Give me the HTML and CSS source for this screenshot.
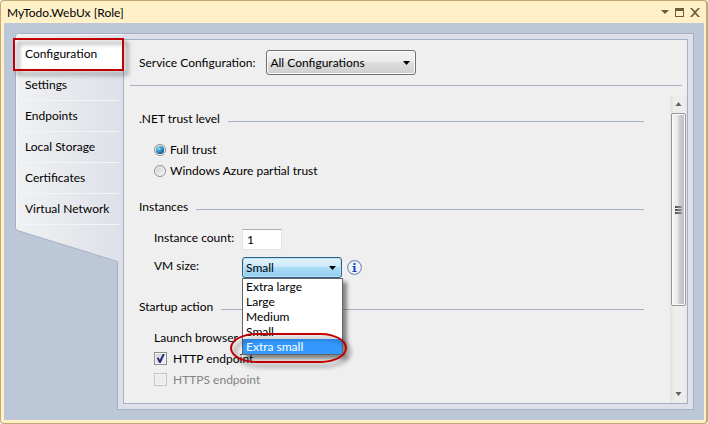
FILE: index.html
```html
<!DOCTYPE html>
<html lang="en">
<head>
<meta charset="utf-8">
<title>MyTodo.WebUx [Role]</title>
<link rel="stylesheet" href="styles.css">
</head>
<body>
<div class="window">
  <header class="titlebar">
    <h1 class="title">MyTodo.WebUx [Role]</h1>
    <div class="window-buttons">
      <button type="button" class="window-button" aria-label="Window menu"><svg width="8" height="11" viewBox="0 0 8 11"><path d="M0 3h8L4 7z"/></svg></button>
      <button type="button" class="window-button" aria-label="Maximize"><svg width="9" height="11" viewBox="0 0 9 11"><path fill-rule="evenodd" d="M0 1h9v9H0zM1 4v5h7V4z"/></svg></button>
      <button type="button" class="window-button" aria-label="Close"><svg width="10" height="11" viewBox="0 0 10 11"><path d="M0 1h2l3 3 3-3h2L6 5.500l4 4.500H8L5 7l-3 3H0l4-4.500z"/></svg></button>
    </div>
  </header>
  <div class="body">
    <nav class="tabs" aria-label="Role pages">
      <svg class="tabs-shape" viewBox="0 0 109 229" preserveAspectRatio="none" aria-hidden="true">
        <defs><linearGradient id="tabs-fill"><stop offset="0" stop-color="#f0f1f2"/><stop offset="1" stop-color="#dde0e8"/></linearGradient></defs>
        <path d="M.5 195V3.500Q.5 .5 3.500 .5H109V229H102.500V228.500L2.500 197.500Q.5 196.500 .5 195z" fill="url(#tabs-fill)"/>
        <path d="M109 .5H3.500Q.5 .5 .5 3.500V195Q.5 196.500 2.500 197.500L102.500 228.500" fill="none" stroke="#a5b1c3"/>
        <path d="M1.500 195V4Q1.500 1.500 4 1.500H108" fill="none" stroke="#f6f7f9"/>
        <path d="M108.500 229V6" stroke="#a5b1c3"/>
      </svg>
      <a class="tab tab-active" href="#configuration" aria-current="page">Configuration</a>
      <a class="tab" href="#settings">Settings</a>
      <a class="tab" href="#endpoints">Endpoints</a>
      <a class="tab" href="#storage">Local Storage</a>
      <a class="tab" href="#certificates">Certificates</a>
      <a class="tab" href="#network">Virtual Network</a>
      <span class="mark mark-box"></span>
    </nav>
    <div class="frame">
      <main class="page" id="configuration">
        <div class="toolbar">
          <label for="service">Service Configuration:</label>
          <span class="picker picker-service">
            <select id="service"><option>All Configurations</option></select>
            <svg class="arrow" width="7" height="4" viewBox="0 0 7 4"><path d="M0 0h7L3.500 4z"/></svg>
          </span>
        </div>
        <div class="scroller">
          <div class="content">
            <section class="section">
              <h2 class="heading">.NET trust level</h2>
              <label class="choice"><input type="radio" name="trust" checked>Full trust</label>
              <label class="choice"><input type="radio" name="trust">Windows Azure partial trust</label>
            </section>
            <section class="section">
              <h2 class="heading">Instances</h2>
              <div class="fields">
                <label for="count">Instance count:</label>
                <input class="count" id="count" type="text" value="1">
                <label for="size">VM size:</label>
                <div class="size-cell">
                  <span class="picker picker-size">
                    <select id="size"><option>Small</option></select>
                    <svg class="arrow" width="7" height="4" viewBox="0 0 7 4"><path d="M0 0h7L3.500 4z"/></svg>
                    <ul class="options" role="listbox" aria-label="VM size">
                      <li role="option">Extra large</li>
                      <li role="option">Large</li>
                      <li role="option">Medium</li>
                      <li role="option">Small</li>
                      <li role="option" class="option-active" aria-selected="true">Extra small</li>
                    </ul>
                    <span class="mark mark-oval"></span>
                  </span>
                  <svg class="info" width="15" height="15" viewBox="0 0 15 15" role="img" aria-label="Information">
                    <circle cx="7.500" cy="7.500" r="6.800" fill="#fff" stroke="#7f93b5" stroke-width="1.200"/>
                    <circle cx="7.500" cy="7.500" r="5.600" fill="#edf3fb"/>
                    <path d="M6.500 3h2v2h-2zM5.500 6h3v5h1v1h-4v-1h1V7h-1z" fill="#1b45b4"/>
                  </svg>
                </div>
              </div>
            </section>
            <section class="section">
              <h2 class="heading">Startup action</h2>
              <p class="choice">Launch browser</p>
              <label class="choice choice-check"><input type="checkbox" checked>HTTP endpoint</label>
              <label class="choice choice-check choice-off"><input type="checkbox" disabled>HTTPS endpoint</label>
            </section>
          </div>
          <div class="scrollbar" aria-hidden="true">
            <svg class="scroll-end" width="17" height="17" viewBox="0 0 17 17"><path d="M5.500 10L8.500 6l3 4z"/></svg>
            <div class="thumb"><i></i><i></i><i></i></div>
            <svg class="scroll-end scroll-down" width="17" height="17" viewBox="0 0 17 17"><path d="M5.500 6h6l-3 4z"/></svg>
          </div>
        </div>
      </main>
    </div>
  </div>
</div>
</body>
</html>
```
FILE: styles.css
```css
* { box-sizing: border-box; }

body {
  margin: 0;
  background: #fff;
  color: #000;
  font: 12px/15px Lato, "Open Sans", sans-serif;
}

h1, h2, p, ul { margin: 0; padding: 0; font: inherit; }
input, select, button { font: inherit; color: inherit; }

.window {
  display: flex;
  flex-direction: column;
  height: 100vh;
  border: 1px solid #c3a878;
  border-right-width: 2px;
  border-radius: 4px;
  background: #fff0c8;
  padding: 0 2px 3px 3px;
}

/* Title bar */
.titlebar {
  display: flex;
  align-items: center;
  justify-content: space-between;
  height: 22px;
  padding: 0 4px 0 3px;
}

.window-buttons { display: flex; gap: 6px; }

.window-button {
  display: flex;
  border: 0;
  padding: 0;
  background: none;
  fill: #6f5b37;
}

/* Body */
.body {
  flex: 1;
  display: flex;
  min-height: 0;
  padding: 10px 10px 10px 11px;
  background: #bcc7d8;
}

.tabs {
  position: relative;
  z-index: 1;
  flex: none;
  width: 109px;
  height: 229px;
  margin-right: -7px;
  padding-top: 6px;
}

.tabs-shape { position: absolute; inset: 0; width: 100%; height: 100%; }

.tab {
  position: relative;
  display: flex;
  align-items: center;
  height: 31px;
  padding: 0 0 2px 10px;
  color: #000;
  text-decoration: none;
}

.tab::after {
  content: "";
  position: absolute;
  inset: auto 5px 0 5px;
  border-bottom: 1px solid #f3f4f7;
}

.tab-active { background: #fff; }

.frame {
  flex: 1;
  display: flex;
  min-width: 0;
  padding: 5px;
  border: 1px solid #a5b1c3;
  background: #dde0e8;
}

.page {
  flex: 1;
  display: flex;
  flex-direction: column;
  min-width: 0;
  border: 1px solid #a5b1c3;
  background: #efefef;
}

.toolbar {
  display: flex;
  align-items: center;
  gap: 11px;
  margin: 0 5px 10px 6px;
  padding: 10px 9px;
  border-bottom: 1px solid #a5b1c3;
}

/* Drop-downs */
.picker { position: relative; display: flex; }

.picker select {
  appearance: none;
  width: 100%;
  height: 100%;
  padding: 0 3px;
  border: 1px solid #707070;
  border-radius: 3px;
  background: linear-gradient(#f2f2f2, #ebebeb 50%, #dddddd 50%, #cfcfcf);
  box-shadow: inset 0 0 0 1px #fafafa;
}

.picker-service { width: 150px; height: 25px; }
.picker-size { width: 100px; height: 21px; }

.picker-size select {
  border-color: #2c628b;
  background: linear-gradient(#e3f4fc, #c9e9fa 50%, #aadcf6 50%, #93ccec);
  box-shadow: inset 0 0 0 1px #b8e0f4;
}

.arrow { position: absolute; right: 6px; top: calc(50% - 2px); pointer-events: none; }

.options {
  position: absolute;
  z-index: 1;
  top: 100%;
  left: 0;
  right: -1px;
  border: 1px solid #646464;
  background: #fff;
  box-shadow: 4px 4px 4px rgba(0, 0, 0, .45);
  list-style: none;
}

.options li { padding-left: 3px; }
.options .option-active { background: #3399ff; color: #fff; }

/* Scrolling area */
.scroller { flex: 1; display: flex; min-height: 0; }

.content {
  flex: 1;
  display: flex;
  flex-direction: column;
  gap: 15px;
  min-width: 0;
  padding: 12px 26px 0 15px;
}

.section { display: flex; flex-direction: column; }

.heading {
  display: flex;
  align-items: center;
  gap: 8px;
  height: 20px;
  margin-bottom: 11px;
}

.heading::after {
  content: "";
  flex: 1;
  margin-top: 7px;
  border-top: 1px solid #a5b1c3;
}

.choice {
  display: flex;
  align-items: center;
  gap: 4px;
  height: 21px;
  padding-left: 15px;
}

.choice-check { gap: 6px; }
.choice-off { color: #838383; }

.choice input {
  appearance: none;
  display: grid;
  place-items: center;
  width: 12px;
  height: 12px;
  margin: 0;
  border: 1px solid #8e8f8f;
  background: linear-gradient(135deg, #cbcfd5, #f6f6f6);
  box-shadow: inset 0 0 0 1px #f4f4f4;
}

.choice input[type="radio"] { border-radius: 50%; }
.choice-check input { width: 13px; height: 13px; }
.choice input:disabled { border-color: #c4c4c4; background: #ececec; }

.choice input[type="radio"]:checked::before {
  content: "";
  width: 8px;
  height: 8px;
  border-radius: 50%;
  background: radial-gradient(circle at 35% 30%, #8fe0f8, #2184b8 50%, #0d3554 90%);
}

.choice input[type="checkbox"]:checked::before {
  content: "";
  width: 9px;
  height: 9px;
  background: #23297a;
  clip-path: polygon(8% 45%, 28% 40%, 43% 65%, 75% 0, 98% 0, 52% 100%, 36% 100%);
}

.fields {
  display: grid;
  grid-template-columns: 88px 1fr;
  grid-auto-rows: 23px;
  row-gap: 5px;
  align-items: center;
  padding: 1px 0 2px 15px;
}

.fields label { padding-bottom: 4px; }

.count {
  width: 40px;
  height: 21px;
  padding: 0 4px;
  border: 1px solid #e2e3ea;
  border-top-color: #abadb3;
  background: #fff;
}

.size-cell { display: flex; align-items: center; gap: 5px; }

.scrollbar {
  display: flex;
  flex-direction: column;
  width: 17px;
  background: linear-gradient(90deg, #e3e3e3, #ededed 30%, #ededed 85%, #e5e5e5);
}

.scroll-end { fill: #606060; }
.scroll-down { margin-top: auto; }

.thumb {
  display: flex;
  flex-direction: column;
  align-items: center;
  justify-content: center;
  gap: 1px;
  height: 63%;
  margin: 0 1px;
  border: 1px solid #979797;
  border-radius: 2px;
  background: linear-gradient(90deg, #f5f5f5, #e6e6e6 48%, #cfd0d3 52%, #bcbdc2);
  box-shadow: inset 0 0 0 1px #fbfbfb;
}

.thumb i {
  width: 7px;
  height: 2px;
  background: linear-gradient(90deg, #484848, #a0a0a0);
}

/* Red call-outs */
.mark {
  position: absolute;
  z-index: 2;
  border: 2px solid #c00000;
  filter: drop-shadow(4px 4px 2px rgba(0, 0, 0, .45));
  pointer-events: none;
}

.mark-box { top: 5px; left: -2px; right: 0; height: 33px; }

.mark-oval {
  top: 76px;
  left: -12px;
  right: -5px;
  height: 30px;
  border-radius: 26px / 15px;
}
```
